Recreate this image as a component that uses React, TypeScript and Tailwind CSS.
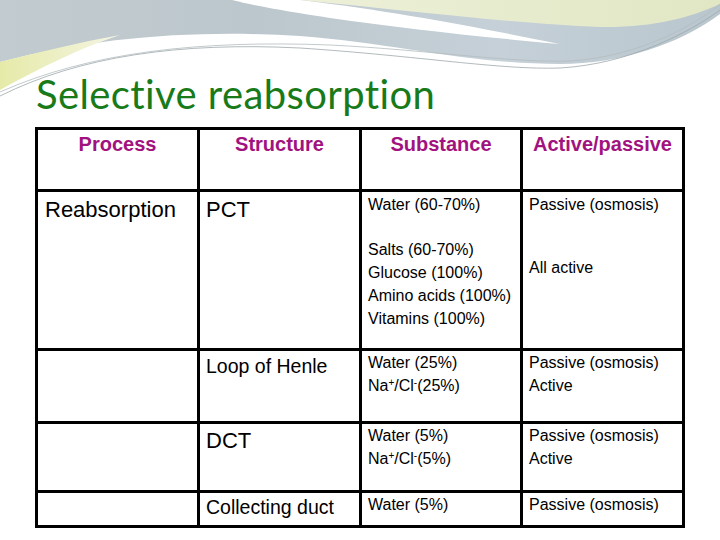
import React from "react";

function Decoration() {
  return (
    <svg
      className="absolute left-0 top-0"
      width="720"
      height="120"
      viewBox="0 0 720 120"
    >
      <defs>
        <linearGradient id="gGray" x1="0" y1="0" x2="1" y2="0">
          <stop offset="0" stopColor="#c2cbcf" />
          <stop offset="0.35" stopColor="#bcc7cd" />
          <stop offset="0.7" stopColor="#c5d0d8" />
          <stop offset="1" stopColor="#b9c6cd" />
        </linearGradient>
        <linearGradient id="gYellow" x1="0" y1="0" x2="1" y2="0">
          <stop offset="0" stopColor="#edf0d8" />
          <stop offset="1" stopColor="#e1e7c4" />
        </linearGradient>
        <linearGradient id="gLeft" x1="0" y1="0" x2="1" y2="0">
          <stop offset="0" stopColor="#e6eaa8" />
          <stop offset="1" stopColor="#f4f5e4" />
        </linearGradient>
      </defs>
      <path
        d="M0,0 H720 V14 C680,44 620,64 560,64 C470,64 400,44 300,36 C200,30 100,36 0,62 Z"
        fill="url(#gGray)"
      />
      <path
        d="M300,0 H720 V4 C690,18 650,28 600,27 C520,24 420,12 300,0 Z"
        fill="url(#gYellow)"
      />
      <path
        d="M232,0 H300 C400,12 480,28 560,44 C470,36 400,28 330,18 C290,12 255,6 232,0 Z"
        fill="#ffffff"
      />
      <path
        d="M0,62 C40,52 80,42 120,35 C80,48 40,68 0,90 Z"
        fill="url(#gLeft)"
      />
      <path
        d="M0,96 C80,56 180,42 300,48 C420,56 500,70 560,68 C630,64 690,32 720,10"
        fill="none"
        stroke="#9ea8ac"
        strokeWidth="0.8"
      />
      <path
        d="M0,92 C90,52 200,40 330,45 C430,50 510,63 570,61 C640,57 700,22 720,4"
        fill="none"
        stroke="#b4bcbf"
        strokeWidth="0.8"
      />
    </svg>
  );
}

export default function App() {
  const body = "font-['Liberation_Sans',Arial,sans-serif] text-black";
  return (
    <div className="relative h-[540px] w-[720px] overflow-hidden bg-white">
      <Decoration />
      <div className="relative flex flex-col">
        <h1 className="ml-[36px] mt-[70px] h-[57px] font-['Lato',sans-serif] text-[40px] leading-[48px] tracking-[0.4px] text-[#187a18] [font-variant-ligatures:none]">
          Selective reabsorption
        </h1>
        <div
          className={`${body} ml-[35px] grid w-[650px] grid-cols-[159px_159px_158px_159px] grid-rows-[59px_156px_70px_66px_32px] gap-[3px] bg-black p-[3px]`}
        >
          {["Process", "Structure", "Substance", "Active/passive"].map((h) => (
            <div
              key={h}
              className="bg-white pt-[2px] text-center text-[20px] font-bold leading-[24px] text-[#a2127f]"
            >
              {h}
            </div>
          ))}

          <div className="bg-white pl-[7px] pt-[5px] text-[22px] leading-[26px]">
            Reabsorption
          </div>
          <div className="bg-white pl-[6px] pt-[5px] text-[22px] leading-[26px]">
            PCT
          </div>
          <div className="bg-white pl-[6px] text-[16px] leading-[23px]">
            <div className="pt-[1px]">Water (60-70%)</div>
            <div className="mt-[22px]">
              <div>Salts (60-70%)</div>
              <div>Glucose (100%)</div>
              <div>Amino acids (100%)</div>
              <div>Vitamins (100%)</div>
            </div>
          </div>
          <div className="bg-white pl-[6px] text-[16px] leading-[23px]">
            <div className="pt-[1px]">Passive (osmosis)</div>
            <div className="mt-[40px]">All active</div>
          </div>

          <div className="bg-white" />
          <div className="bg-white pl-[6px] pt-[3px] text-[19.5px] leading-[24px]">
            Loop of Henle
          </div>
          <div className="bg-white pl-[6px] text-[16px] leading-[23px]">
            <div>Water (25%)</div>
            <div>
              Na<sup className="text-[10px]">+</sup>/Cl<sup className="text-[10px]">-</sup>(25%)
            </div>
          </div>
          <div className="bg-white pl-[6px] text-[16px] leading-[23px]">
            <div>Passive (osmosis)</div>
            <div>Active</div>
          </div>

          <div className="bg-white" />
          <div className="bg-white pl-[6px] pt-[4px] text-[22px] leading-[26px]">
            DCT
          </div>
          <div className="bg-white pl-[6px] text-[16px] leading-[23px]">
            <div>Water (5%)</div>
            <div>
              Na<sup className="text-[10px]">+</sup>/Cl<sup className="text-[10px]">-</sup>(5%)
            </div>
          </div>
          <div className="bg-white pl-[6px] text-[16px] leading-[23px]">
            <div>Passive (osmosis)</div>
            <div>Active</div>
          </div>

          <div className="bg-white" />
          <div className="bg-white pl-[6px] pt-[2px] text-[19.5px] leading-[24px]">
            Collecting duct
          </div>
          <div className="bg-white pl-[6px] text-[16px] leading-[23px]">
            Water (5%)
          </div>
          <div className="bg-white pl-[6px] text-[16px] leading-[23px]">
            Passive (osmosis)
          </div>
        </div>
      </div>
    </div>
  );
}
